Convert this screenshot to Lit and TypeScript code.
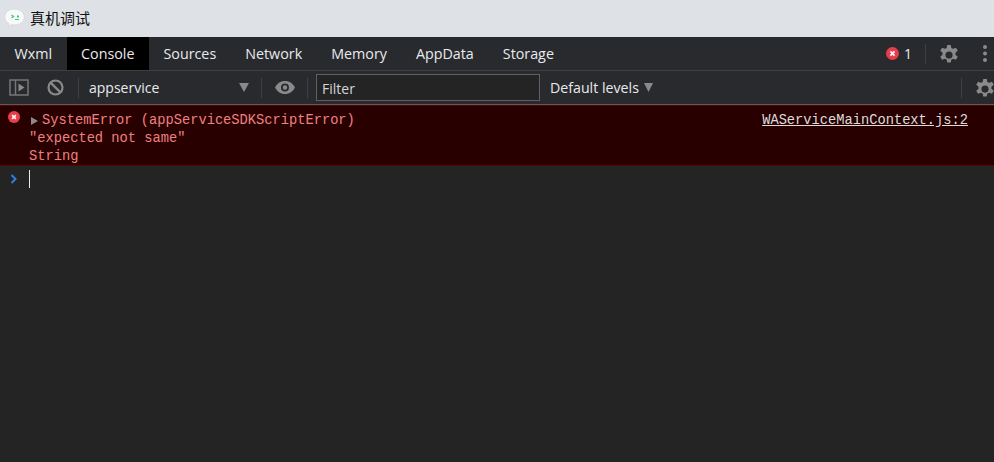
import { LitElement, html, css, svg } from "lit";
import { customElement } from "lit/decorators.js";

const gear = svg`<path fill="#8a8a8a" fill-rule="evenodd" d="M7.600 0h2.800l.4 2.300c.5.200 1 .4 1.400.7l2.200-.9 1.400 2.400-1.800 1.500a6 6 0 0 1 0 1.600l1.800 1.500-1.400 2.400-2.200-.9c-.4.300-.9.500-1.400.7l-.4 2.300H7.600l-.4-2.300c-.5-.2-1-.4-1.400-.7l-2.200.9-1.400-2.400 1.800-1.500a6 6 0 0 1 0-1.600L2.200 4.500l1.400-2.400 2.200.9c.4-.3.9-.5 1.400-.7zM9 5a2.800 2.800 0 1 0 0 5.600A2.800 2.800 0 0 0 9 5z"/>`;

const errIcon = svg`<circle cx="7" cy="7" r="7" fill="#ea3d4c"/><path d="M4.800 4.800l4.400 4.400M9.200 4.800l-4.400 4.400" stroke="#fff" stroke-width="1.800" fill="none"/>`;

@customElement("app-root")
export class AppRoot extends LitElement {
  static styles = css`
    :host {
      display: flex;
      flex-direction: column;
      width: 994px;
      height: 462px;
      overflow: hidden;
      background: #242424;
      font-family: "Open Sans", "Noto Sans", sans-serif;
      font-size: 14px;
      color: #e8eaed;
    }
    .title {
      height: 37px;
      flex: none;
      background: #dee1e6;
      display: flex;
      align-items: center;
      padding-left: 4px;
      gap: 5px;
      color: #111;
      box-sizing: border-box;
      padding-bottom: 2px;
    }
    .title svg { flex: none; display: block; }
    .title span {
      font-family: "Noto Sans CJK SC", sans-serif;
      font-size: 15px;
    }
    .tabs {
      height: 34px;
      flex: none;
      box-sizing: border-box;
      background: #292a2d;
      border-bottom: 1px solid #3d3e41;
      display: flex;
      align-items: stretch;
    }
    .tab {
      display: flex;
      align-items: center;
      padding: 0 14.500px;
      font-size: 14.300px;
    }
    .tab.active {
      background: #000;
    }
    .spacer { flex: 1; }
    .tabs-right {
      display: flex;
      align-items: center;
    }
    .tabs-right svg { display: block; flex: none; }
    .count { margin-left: 5px; width: 7px; font-size: 14px; }
    .vsep {
      width: 1px;
      height: 20px;
      background: #3f4043;
    }
    .tabs-right .vsep { margin: 0 14px; }
    .tabs-right .dots { margin-left: 25px; margin-right: 7px; }
    .toolbar {
      height: 34px;
      flex: none;
      box-sizing: border-box;
      background: #292a2d;
      border-bottom: 1px solid #5a5b5e;
      display: flex;
      align-items: center;
    }
    .toolbar svg { display: block; flex: none; }
    .sb { margin-left: 9px; }
    .clear { margin-left: 18px; }
    .toolbar .vsep { flex: none; }
    .v1 { margin-left: 14px; }
    .ctx {
      width: 160px;
      margin-left: 10px;
      display: flex;
      align-items: center;
      justify-content: space-between;
    }
    .v2 { margin-left: 12px; }
    .eye { margin-left: 13px; }
    .v3 { margin-left: 12px; }
    .filter {
      margin-left: 8px;
      width: 224px;
      height: 27px;
      box-sizing: border-box;
      border: 1px solid #5f6064;
      background: #242424;
      padding: 1px 5px 0;
      display: flex;
      align-items: center;
      font-size: 14px;
      color: #d4d6d9;
    }
    .levels {
      margin-left: 10px;
      display: flex;
      align-items: center;
      gap: 5px;
      font-size: 14.200px;
    }
    .v4 { margin-left: auto; }
    .gear2 { margin-left: 14px; }
    .error {
      height: 61px;
      flex: none;
      box-sizing: border-box;
      background: #290000;
      border-bottom: 1px solid #5c0000;
      border-top: 1px solid #5c0000;
      position: relative;
      padding: 6px 26px 0 29px;
      font-family: "Liberation Mono", monospace;
      font-size: 13.730px;
      line-height: 18px;
      color: #ef8080;
    }
    .err-icon {
      position: absolute;
      left: 8px;
      top: 5px;
      display: block;
    }
    .row { display: flex; align-items: center; height: 18px; }
    .line { height: 18px; white-space: pre; }
    .arrow {
      width: 0;
      height: 0;
      border-left: 7px solid #8a8a8a;
      border-top: 4.500px solid transparent;
      border-bottom: 4.500px solid transparent;
      margin: 0 4px 0 2px;
    }
    .src {
      margin-left: auto;
      color: #dcdcdc;
      text-decoration: underline;
    }
    .prompt {
      flex: 1;
      display: flex;
      align-items: flex-start;
      padding: 4px 0 0 10px;
    }
    .prompt svg { display: block; margin-top: 4px; }
    .caret {
      width: 1px;
      height: 18px;
      background: #e8eaed;
      margin-left: 11px;
    }
  `;

  render() {
    const tabs = ["Wxml", "Console", "Sources", "Network", "Memory", "AppData", "Storage"];
    return html`
      <div class="title">
        <svg width="21" height="20" viewBox="0 0 21 20">
          <path d="M10.500 1c5.500 0 9.800 3.400 9.800 8s-4.300 8-9.800 8c-1.100 0-2.200-.2-3.200-.5L4.500 19l.2-3.600C2.200 14 .7 11.700.7 9c0-4.600 4.300-8 9.800-8z" fill="#f8f9f9" stroke="#d2d5d8" stroke-width=".8"/>
          <path d="M7.500 7l2 1.500-2 1.500" stroke="#3ecb80" stroke-width="1.300" fill="none"/>
          <rect x="13" y="7.500" width="2" height="2" fill="#3ecb80"/>
          <path d="M11 11.500h4" stroke="#3ecb80" stroke-width="1" fill="none"/>
        </svg>
        <span>真机调试</span>
      </div>
      <div class="tabs">
        ${tabs.map((t) => html`<div class="tab ${t === "Console" ? "active" : ""}">${t}</div>`)}
        <div class="spacer"></div>
        <div class="tabs-right">
          <svg width="13" height="13" viewBox="0 0 14 14">${errIcon}</svg>
          <span class="count">1</span>
          <div class="vsep"></div>
          <svg width="18" height="18" viewBox="2.200 0 13.600 14">${gear}</svg>
          <svg class="dots" width="4" height="17" viewBox="0 0 4 17">
            <circle cx="2" cy="2" r="2" fill="#8a8a8a"/><circle cx="2" cy="8.500" r="2" fill="#8a8a8a"/><circle cx="2" cy="15" r="2" fill="#8a8a8a"/>
          </svg>
        </div>
      </div>
      <div class="toolbar">
        <svg class="sb" width="20" height="17" viewBox="0 0 20 17">
          <rect x="1" y="1" width="18" height="15" fill="none" stroke="#777" stroke-width="1.500"/>
          <path d="M6.500 1v15" stroke="#777" stroke-width="1.500"/>
          <path d="M9.500 4.500l6 4-6 4z" fill="#8a8a8a"/>
        </svg>
        <svg class="clear" width="17" height="17" viewBox="0 0 17 17">
          <circle cx="8.500" cy="8.500" r="7" fill="none" stroke="#8a8a8a" stroke-width="2.200"/>
          <path d="M3.600 3.600l9.800 9.800" stroke="#8a8a8a" stroke-width="2.200"/>
        </svg>
        <div class="vsep v1"></div>
        <div class="ctx">
          <span>appservice</span>
          <svg width="10" height="9" viewBox="0 0 10 9"><path d="M0 0h10L5 9z" fill="#8a8a8a"/></svg>
        </div>
        <div class="vsep v2"></div>
        <svg class="eye" width="20" height="13" viewBox="0 0 20 13">
          <path fill="#8a8a8a" fill-rule="evenodd" d="M10 0c4.500 0 8.200 2.700 10 6.500C18.200 10.300 14.500 13 10 13S1.800 10.300 0 6.500C1.800 2.700 5.500 0 10 0zm0 2.500a4 4 0 1 0 0 8 4 4 0 0 0 0-8zm0 1.800a2.200 2.200 0 1 1 0 4.400 2.200 2.200 0 0 1 0-4.400z"/>
        </svg>
        <div class="vsep v3"></div>
        <div class="filter">Filter</div>
        <div class="levels">
          <span>Default levels</span>
          <svg width="9" height="9" viewBox="0 0 9 9"><path d="M0 0h9L4.500 9z" fill="#8a8a8a"/></svg>
        </div>
        <div class="vsep v4"></div>
        <svg class="gear2" width="18" height="18" viewBox="2.200 0 13.600 14">${gear}</svg>
      </div>
      <div class="error">
        <svg class="err-icon" width="12" height="12" viewBox="0 0 14 14">${errIcon}</svg>
        <div class="row">
          <i class="arrow"></i><span>SystemError (appServiceSDKScriptError)</span>
          <span class="src">WAServiceMainContext.js:2</span>
        </div>
        <div class="line">"expected not same"</div>
        <div class="line">String</div>
      </div>
      <div class="prompt">
        <svg width="8" height="10" viewBox="0 0 8 10"><path d="M1.500 1l4 4-4 4" fill="none" stroke="#2f7fe0" stroke-width="2"/></svg>
        <div class="caret"></div>
      </div>
    `;
  }
}
